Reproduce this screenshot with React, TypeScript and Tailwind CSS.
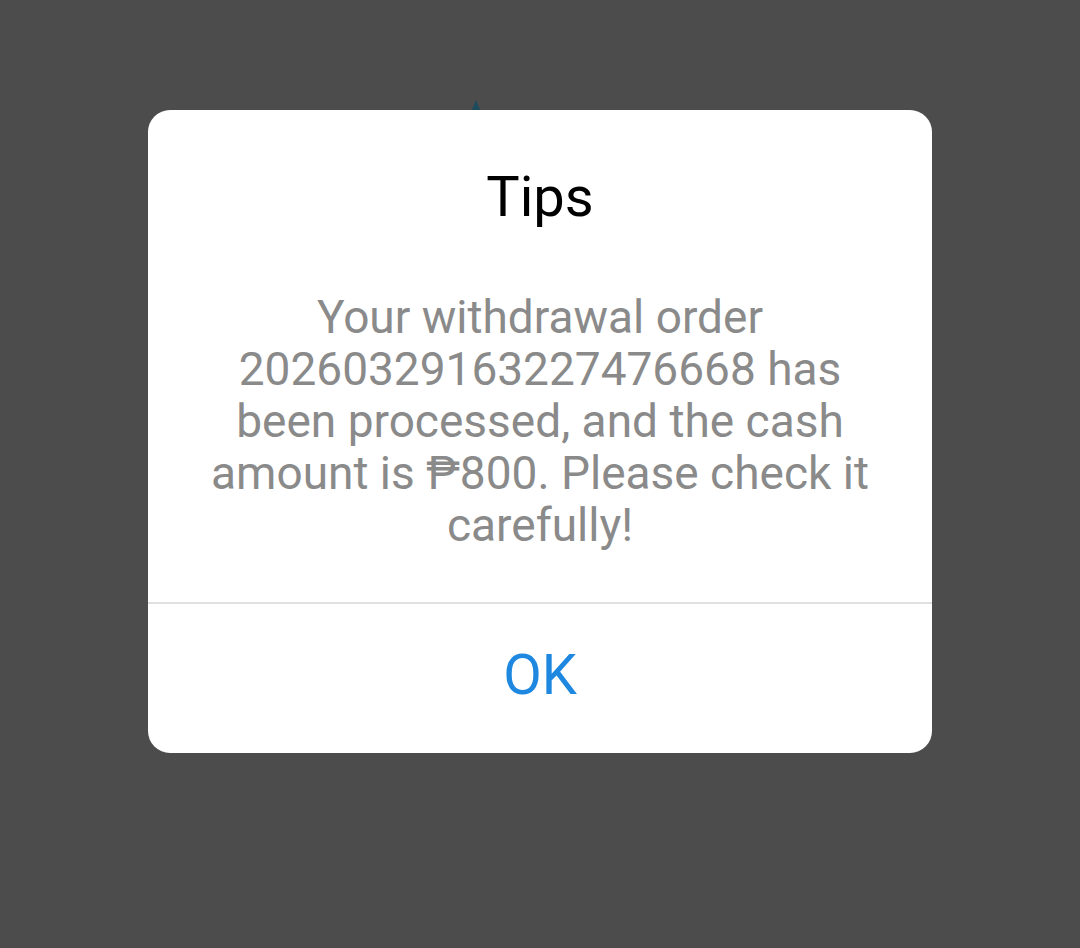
export default function App() {
  return (
    <div className="relative w-[1080px] h-[948px] bg-[#4c4c4c] overflow-hidden" style={{ fontFamily: 'Roboto, "Noto Sans", sans-serif' }}>
      <div className="absolute left-[471px] top-[100px] w-0 h-0 border-l-[5px] border-r-[5px] border-b-[12px] border-l-transparent border-r-transparent border-b-[#1d4a5c]" />
      <div className="absolute left-[148px] top-[110px] w-[784px] bg-white rounded-[22px] flex flex-col">
        <div className="pt-[54px] text-center text-[56px] leading-[67px] text-black">Tips</div>
        <div className="mt-[60px] px-[56px] text-center text-[46px] leading-[52px] text-[#8a8a8a]">
          Your withdrawal order 20260329163227476668 has been processed, and the cash amount is ₱800. Please check it carefully!
        </div>
        <div className="mt-[51px] h-[2px] bg-[#e0e0e0]" />
        <div className="h-[149px] pb-[8px] flex items-center justify-center text-[56px] text-[#1e88e0]">OK</div>
      </div>
    </div>
  );
}
